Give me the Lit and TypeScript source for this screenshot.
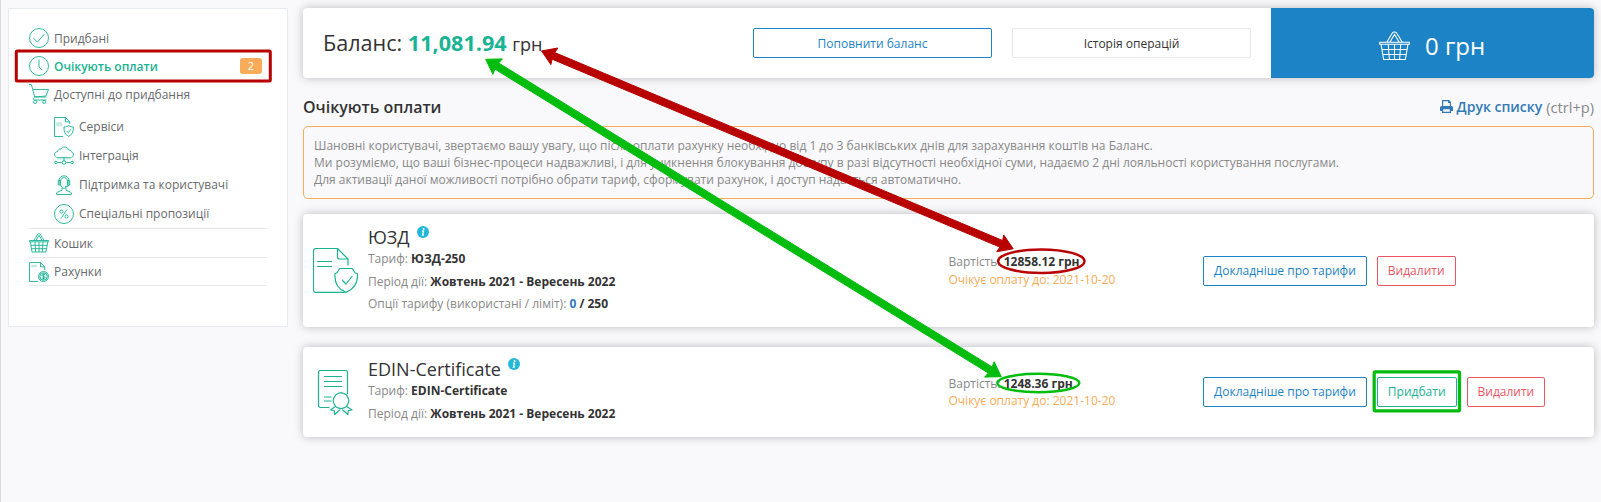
import { LitElement, html, svg, css, nothing } from "lit";
import { customElement, property } from "lit/decorators.js";
import { classMap } from "lit/directives/class-map.js";

const ICONS: Record<string, any> = {
  check: svg`<circle cx="10" cy="10" r="9.5"/><path d="M4.6 10.2l3.8 4 7-8.2"/>`,
  clock: svg`<circle cx="10" cy="10" r="9.5"/><path d="M10 3.5V11l3.2 3"/>`,
  cart: svg`<path d="M0 .5h2.400l3.300 12.500h11.800M4 5.500h15.500l-2.500 6.500-11.500 1M5.500 13.200c-1.500.8-1.500 2.600 0 2.800h12"/><circle cx="6.200" cy="17.900" r="1.600"/><circle cx="15.200" cy="17.900" r="1.600"/>`,
  doc: svg`<path d="M9 19.5H.5V.5h11l4.2 4.3V7M11.5.5v4.3h4.2"/><path class="soft" d="M2.2 5.2h6v4h-6z"/><path d="M14.7 8.4c1.3 1.1 2.7 1.5 4.7 1.6.2 4.500-1.200 7.700-4.700 9.400-3.500-1.700-4.900-4.900-4.700-9.400 2-.1 3.400-.5 4.700-1.600z"/><path d="M12.600 14l1.600 1.700 2.900-3.500"/>`,
  cloud: svg`<path d="M4 11.500C1.700 11.500.500 10.200.500 8.500S1.800 5.700 3.500 5.600C4 3.500 5.500 2.700 7 3c.8-1.600 2.200-2.200 3.800-2 2 .1 3.300 1.300 3.800 3 2 0 3 .9 3.200 2.300 1.200.3 1.800 1.200 1.700 2.300-.1 1.800-1.300 2.900-3 2.900z"/><path class="soft" d="M3 11.800h14v1.700H3z"/><path d="M10 11.500v4M3.200 16.500h4.600M12.200 16.500h4.600"/><circle cx="1.900" cy="16.500" r="1.300"/><circle cx="10" cy="16.500" r="1.800"/><circle cx="18.100" cy="16.500" r="1.300"/>`,
  support: svg`<path d="M5 9.500V6.500C5 3 7 .800 10 .800s5 2.200 5 5.700v3M6.500 9V6.500C6.500 4 8 2.600 10 2.600s3.500 1.400 3.500 3.900V9c0 2.300-1.500 4.300-3.500 4.300S6.500 11.300 6.500 9zM4.300 5.500v4.500h2V5.500zM13.700 5.500v4.500h2V5.500zM15 10c0 1.200-2 1.600-4 1.600M8 12.700v2.600L3.500 17c-.7.500-1 1.200-1 2.500h15c0-1.300-.3-2-1-2.500L12 15.300v-2.600"/>`,
  percent: svg`<circle cx="10" cy="10" r="9.500"/><path d="M13 5.500L7 14.500"/><circle cx="7.500" cy="7.500" r="1.600"/><circle cx="12.500" cy="12.500" r="1.600"/>`,
  basket: svg`<path d="M.500 7.500h19v1.300H.500zM1.300 8.800l1.700 10.200h14l1.700-10.200M1.800 12.300h16.400M2.400 15.700h15.200M6 9l.700 10M10 9v10M14 9l-.700 10M5 7.500L8.600 1.400c.5-.9 2.300-.9 2.800 0L15 7.500M7 7.500L10 2.200l3 5.300"/>`,
  bill: svg`<path d="M9 19.500H.500V.500h11l4.200 4.300V8M11.500.500v4.300h4.200"/><path class="soft" d="M2 2.700h6v2.600H2z"/><circle class="tint" cx="14.500" cy="14.500" r="5"/><circle cx="14.500" cy="14.500" r="3.700"/><path d="M16 12.800c-.8-.8-2.900-.6-2.900.5 0 1.300 2.900.9 2.900 2.300 0 1.100-2.200 1.300-3 .4M14.500 11.500v6"/>`,
};

const NAV = [
  { icon: "check", label: "Придбані" },
  { icon: "clock", label: "Очікують оплати", active: true, badge: "2" },
  { icon: "cart", label: "Доступні до придбання" },
  { icon: "doc", label: "Сервіси", sub: true, first: true },
  { icon: "cloud", label: "Інтеграція", sub: true },
  { icon: "support", label: "Підтримка та користувачі", sub: true },
  { icon: "percent", label: "Спеціальні пропозиції", sub: true },
  { icon: "basket", label: "Кошик", line: true },
  { icon: "bill", label: "Рахунки", line: true, last: true },
];

@customElement("side-nav")
class SideNav extends LitElement {
  static styles = css`
    :host { display: block; box-sizing: border-box; width: 280px; height: 319px; padding: 15px 20px; background: #fff; border: 1px solid #e7eaf3; }
    .item { display: flex; align-items: center; box-sizing: border-box; height: 28px; gap: 5px; color: #676a6c; font-size: 12px; }
    .sub { height: 29px; padding-left: 25px; }
    .first { margin-top: 4px; }
    .line { height: 29px; border-top: 1px solid #e7e7e7; }
    .last { border-bottom: 1px solid #e7e7e7; }
    .active { color: #1ab394; font-weight: 600; }
    .icon { flex: none; width: 20px; height: 20px; fill: none; stroke: #1ab394; stroke-width: .9; }
    .soft { fill: #c3ebe3; stroke: none; }
    .tint { fill: #d8f3ee; }
    .label { flex: 1; white-space: nowrap; }
    .badge { width: 22px; height: 16px; margin-right: 5px; border-radius: 3px; background: #f8ac59; color: #fff; font-size: 11px; font-weight: 400; line-height: 16px; text-align: center; }
  `;
  render() {
    return NAV.map((n) => html`
      <div class=${classMap({ item: true, sub: !!n.sub, first: !!n.first, line: !!n.line, last: !!n.last, active: !!n.active })}>
        <svg class="icon" viewBox="0 0 20 20">${ICONS[n.icon]}</svg>
        <span class="label">${n.label}</span>
        ${n.badge ? html`<span class="badge">${n.badge}</span>` : nothing}
      </div>`);
  }
}

@customElement("product-card")
class ProductCard extends LitElement {
  @property() icon = "";
  @property() name = "";
  @property() tariff = "";
  @property() price = "";
  @property({ type: Boolean }) options = false;
  @property({ type: Boolean }) buyable = false;
  static styles = css`
    :host { display: grid; grid-template-columns: 45px 570.500px 243.500px 1fr; column-gap: 10px; align-items: center; box-sizing: border-box; padding-left: 10px; background: #fff; border-radius: 4px; box-shadow: 0 0 10px rgba(0, 0, 0, .25); font-size: 12px; color: #888; white-space: nowrap; }
    .icon { display: block; width: 45px; height: 45px; fill: none; stroke: #1ab394; stroke-width: 1.200; stroke-linejoin: round; stroke-linecap: round; }
    .paper { fill: #fff; }
    .tall { padding-top: 1.500px; }
    .title { display: flex; gap: 7px; height: 21px; line-height: 20px; font-size: 18px; color: #333; }
    .info { width: 12px; height: 12px; margin-top: -1px; }
    .row { line-height: 22.500px; }
    b { font-weight: 700; color: #333; }
    .used { color: #337ab7; }
    .cost { line-height: 17.500px; }
    .due { color: #f8ac59; }
    .actions { display: flex; gap: 10px; padding-left: 1px; }
    .btn { box-sizing: border-box; height: 30px; padding: 0 10px; border: 1px solid; border-radius: 2px; font: inherit; line-height: 28px; background: #fff; }
    .blue { color: #1c84c6; }
    .green { color: #1ab394; }
    .red { color: #ed5565; }
  `;
  render() {
    const art = this.icon === "shield"
      ? svg`<path d="M31 44.400H3a2.500 2.500 0 0 1-2.500-2.500V3A2.500 2.500 0 0 1 3 .500H24.500l10.500 10.500v6M24.500.500v8.500a2 2 0 0 0 2 2h8.500M4.500 13.500h14M4.500 18.500h14"/><path class="paper" d="M26.700 20.500h12.600l2.700 4.300 2.500 1c.5 9-3.700 15.500-11.500 18.600-7.800-3.100-11.700-9.600-11-18.600l2-1z"/><path d="M29.500 32.500l3.500 3.500 6-7.500"/>`
      : svg`<path d="M16 37.500H7.500A2 2 0 0 1 5.500 35.500V2.500A2 2 0 0 1 7.500.500h25a2 2 0 0 1 2 2v21M11.500 6.500h17M11.500 11.500h17M11.500 16.500h17M11.500 27h6.500M11.500 31h6.500"/><path class="paper" d="M21.500 37l-4 3 3.700.500.500 4 5-4.500M34.500 37l4.500 3-3.700.500-.500 4-5-4.500"/><path class="paper" d="M28 22.700l3 .8 2.500 1.500 1.500 2.700.900 3-.900 3-1.500 2.700-2.500 1.500-3 .800-3-.800-2.500-1.500-1.500-2.700-.900-3 .900-3 1.500-2.700 2.500-1.500z"/>`;
    return html`
      <svg class="icon" viewBox="0 0 45 45">${art}</svg>
      <div class=${classMap({ tall: this.options })}>
        <div class="title">${this.name}
          <svg class="info" viewBox="0 0 12 12"><circle cx="6" cy="6" r="6" fill="#23b7d9"/><path d="M5 5.100h1.500L5.500 9h1.300" fill="none" stroke="#fff" stroke-width="1.300"/><circle cx="6.600" cy="3" r="1" fill="#fff"/></svg>
        </div>
        <div class="row">Тариф: <b>${this.tariff}</b></div>
        <div class="row">Період дії: <b>Жовтень 2021 - Вересень 2022</b></div>
        ${this.options ? html`<div class="row">Опції тарифу (використані / ліміт): <b><span class="used">0</span> / 250</b></div>` : nothing}
      </div>
      <div class="cost">
        <div>Вартість: <b>${this.price} грн</b></div>
        <div class="due">Очікує оплату до: 2021-10-20</div>
      </div>
      <div class="actions">
        <button class="btn blue">Докладніше про тарифи</button>
        ${this.buyable ? html`<button class="btn green">Придбати</button>` : nothing}
        <button class="btn red">Видалити</button>
      </div>`;
  }
}

/** Double-headed arrow between two points, as one closed outline. */
function arrow(x1: number, y1: number, x2: number, y2: number, color: string) {
  const len = Math.hypot(x2 - x1, y2 - y1);
  const ux = (x2 - x1) / len;
  const uy = (y2 - y1) / len;
  const at = (d: number, o: number) => `${(x1 + ux * d - uy * o).toFixed(1)},${(y1 + uy * d + ux * o).toFixed(1)}`;
  const pts = [
    at(0.5, 0), at(14.5, 9), at(13.5, 3.6), at(len - 13.5, 3.6), at(len - 14.5, 9),
    at(len - 0.5, 0), at(len - 14.5, -9), at(len - 13.5, -3.6), at(13.5, -3.6), at(14.5, -9),
  ];
  return svg`<polygon points=${pts.join(" ")} fill=${color} stroke=${color} stroke-width="1" stroke-linejoin="round"/>`;
}

@customElement("app-root")
class AppRoot extends LitElement {
  static styles = css`
    :host { display: block; position: relative; box-sizing: border-box; height: 502px; overflow: hidden; background: #f9f9fb; border-left: 1px solid #d9d9dc; font-family: "Open Sans", sans-serif; color: #333; }
    .page { display: flex; gap: 15px; padding: 8px 7px; }
    .main { flex: 1; min-width: 0; }
    .top { display: flex; height: 70px; border-radius: 4px; background: #fff; box-shadow: 0 0 10px rgba(0, 0, 0, .25); }
    .balance { flex: 1; padding-left: 20px; font-size: 21.600px; line-height: 70px; white-space: nowrap; }
    .sum { color: #1ab394; font-weight: 700; }
    .unit { font-size: 18px; }
    .buttons { display: flex; gap: 20px; padding: 20px 20px 0 0; }
    .btn { box-sizing: border-box; width: 239px; height: 30px; border: 1px solid #1c84c6; border-radius: 2px; background: #fff; color: #1c84c6; font: inherit; font-size: 12px; }
    .plain { border-color: #e7eaec; color: #333; }
    .cart { display: flex; align-items: center; box-sizing: border-box; width: 323px; padding-left: 108px; gap: 15px; background: #1c84c6; border-radius: 0 4px 4px 0; color: #fff; font-size: 24px; }
    .basket { width: 31px; height: 30px; margin-top: 6px; fill: none; stroke: #fff; stroke-width: .7; }
    .amount { padding-top: 5px; white-space: nowrap; }
    .heading { display: flex; justify-content: space-between; height: 48px; line-height: 58px; font-size: 16px; font-weight: 600; }
    .print { display: flex; gap: 4px; font-size: 14px; color: #337ab7; }
    .printer { width: 13px; height: 13px; margin-top: 22px; }
    .key { color: #888; font-size: 14.600px; font-weight: 400; }
    .notice { box-sizing: border-box; height: 73px; padding: 10px; border: 1px solid #f8ac59; border-radius: 5px; font-size: 12px; line-height: 17px; color: #888; white-space: nowrap; }
    .one { height: 113px; margin-top: 15px; }
    .two { height: 90px; margin-top: 20px; }
    .marks { position: absolute; left: -1px; top: 0; width: 1601px; height: 502px; fill: none; pointer-events: none; }
  `;
  render() {
    return html`
      <div class="page">
        <side-nav></side-nav>
        <div class="main">
          <div class="top">
            <div class="balance">Баланс: <span class="sum">11,081.94</span> <span class="unit">грн</span></div>
            <div class="buttons">
              <button class="btn">Поповнити баланс</button>
              <button class="btn plain">Історія операцій</button>
            </div>
            <div class="cart">
              <svg class="basket" viewBox="0 0 20 20" preserveAspectRatio="none">${ICONS.basket}</svg>
              <span class="amount">0 грн</span>
            </div>
          </div>
          <div class="heading">
            <span>Очікують оплати</span>
            <span class="print">
              <svg class="printer" viewBox="0 0 13 13"><path fill="#337ab7" fill-rule="evenodd" d="M2 0h7l2 2v4h.5A1.500 1.500 0 0 1 13 7.500V11h-2v2H2v-2H0V7.500A1.500 1.500 0 0 1 1.500 6H2zM3.200 1.200V6h6.600V3H8V1.200zM3.200 9.200v2.600h6.600V9.200z"/></svg>
              <span>Друк списку</span> <span class="key">(ctrl+p)</span>
            </span>
          </div>
          <div class="notice">
            <div>Шановні користувачі, звертаємо вашу увагу, що після оплати рахунку необхідно від 1 до 3 банківських днів для зарахування коштів на Баланс.</div>
            <div>Ми розуміємо, що ваші бізнес-процеси надважливі, і для уникнення блокування доступу в разі відсутності необхідної суми, надаємо 2 дні лояльності користування послугами.</div>
            <div>Для активації даної можливості потрібно обрати тариф, сформувати рахунок, і доступ надається автоматично.</div>
          </div>
          <product-card class="one" icon="shield" name="ЮЗД" tariff="ЮЗД-250" price="12858.12" options></product-card>
          <product-card class="two" icon="cert" name="EDIN-Certificate" tariff="EDIN-Certificate" price="1248.36" buyable></product-card>
        </div>
      </div>
      <svg class="marks" viewBox="0 0 1601 502">
        <rect x="16.300" y="51" width="254" height="30" rx="1" stroke="#b80000" stroke-width="3"/>
        <rect x="1374.200" y="371.800" width="85.300" height="39" rx="1" stroke="#02bc0e" stroke-width="3.200"/>
        <ellipse cx="1041.300" cy="261.200" rx="43.200" ry="11.800" stroke="#b80000" stroke-width="2.500"/>
        <ellipse cx="1038.300" cy="383" rx="41" ry="9.300" stroke="#02bc0e" stroke-width="2.500"/>
        ${arrow(541, 50.7, 1013.7, 249, "#b80000")}
        ${arrow(485.3, 59, 1001.7, 377, "#02bc0e")}
      </svg>`;
  }
}
